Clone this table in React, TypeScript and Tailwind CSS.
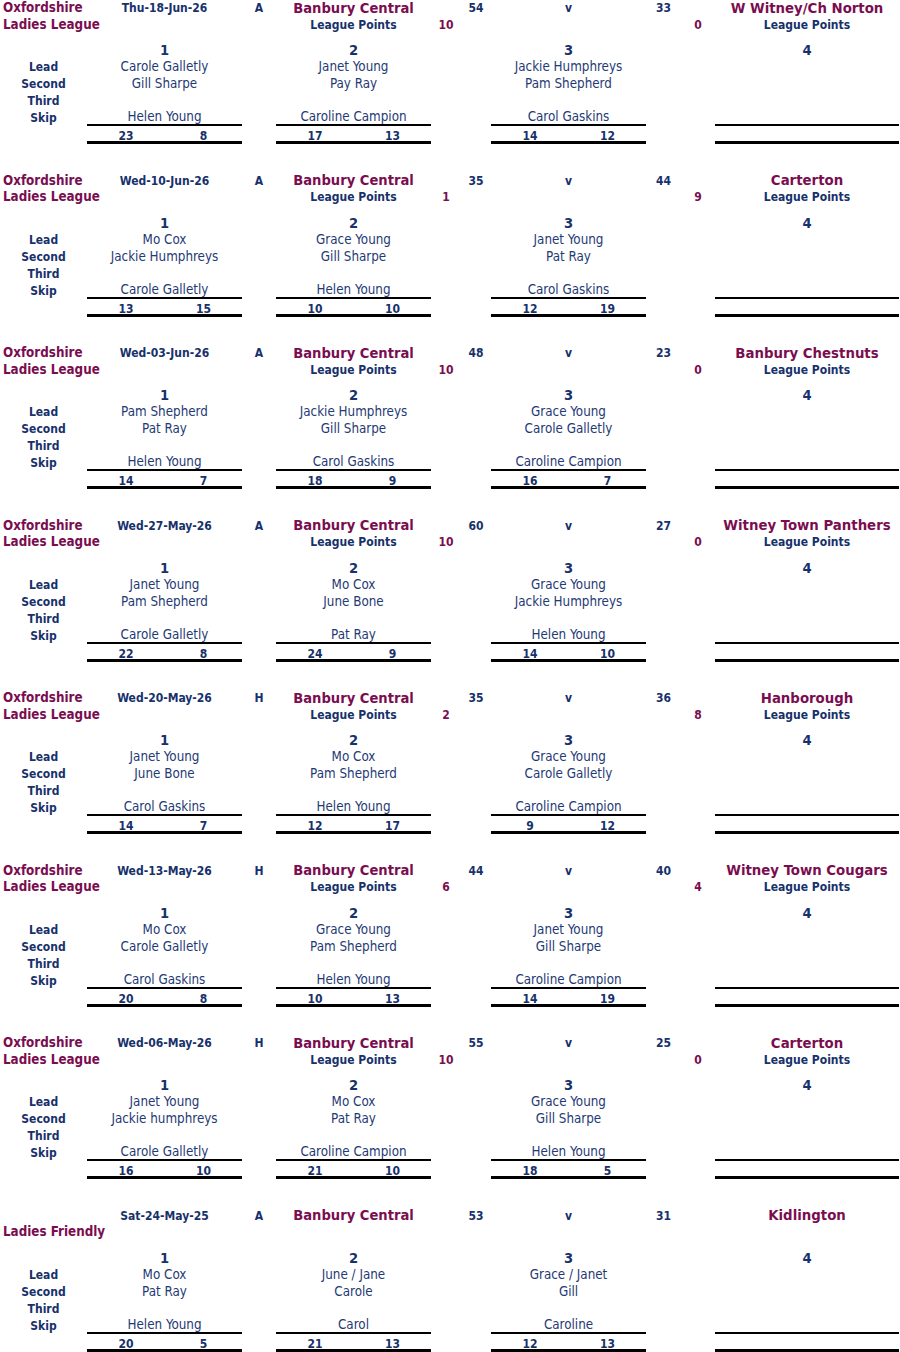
type Rink = { lead: string; second: string; third: string; skip: string; us: number; them: number };

type Match = {
  league1: string;
  league2: string;
  date: string;
  venue: string;
  home: number;
  away: number;
  opponent: string;
  points?: [number, number];
  rinks: Rink[];
};

const r = (lead: string, second: string, skip: string, us: number, them: number): Rink => ({
  lead,
  second,
  third: "",
  skip,
  us,
  them,
});

const matches: Match[] = [
  {
    league1: "Oxfordshire",
    league2: "Ladies League",
    date: "Thu-18-Jun-26",
    venue: "A",
    home: 54,
    away: 33,
    opponent: "W Witney/Ch Norton",
    points: [10, 0],
    rinks: [
      r("Carole Galletly", "Gill Sharpe", "Helen Young", 23, 8),
      r("Janet Young", "Pay Ray", "Caroline Campion", 17, 13),
      r("Jackie Humphreys", "Pam Shepherd", "Carol Gaskins", 14, 12),
    ],
  },
  {
    league1: "Oxfordshire",
    league2: "Ladies League",
    date: "Wed-10-Jun-26",
    venue: "A",
    home: 35,
    away: 44,
    opponent: "Carterton",
    points: [1, 9],
    rinks: [
      r("Mo Cox", "Jackie Humphreys", "Carole Galletly", 13, 15),
      r("Grace Young", "Gill Sharpe", "Helen Young", 10, 10),
      r("Janet Young", "Pat Ray", "Carol Gaskins", 12, 19),
    ],
  },
  {
    league1: "Oxfordshire",
    league2: "Ladies League",
    date: "Wed-03-Jun-26",
    venue: "A",
    home: 48,
    away: 23,
    opponent: "Banbury Chestnuts",
    points: [10, 0],
    rinks: [
      r("Pam Shepherd", "Pat Ray", "Helen Young", 14, 7),
      r("Jackie Humphreys", "Gill Sharpe", "Carol Gaskins", 18, 9),
      r("Grace Young", "Carole Galletly", "Caroline Campion", 16, 7),
    ],
  },
  {
    league1: "Oxfordshire",
    league2: "Ladies League",
    date: "Wed-27-May-26",
    venue: "A",
    home: 60,
    away: 27,
    opponent: "Witney Town Panthers",
    points: [10, 0],
    rinks: [
      r("Janet Young", "Pam Shepherd", "Carole Galletly", 22, 8),
      r("Mo Cox", "June Bone", "Pat Ray", 24, 9),
      r("Grace Young", "Jackie Humphreys", "Helen Young", 14, 10),
    ],
  },
  {
    league1: "Oxfordshire",
    league2: "Ladies League",
    date: "Wed-20-May-26",
    venue: "H",
    home: 35,
    away: 36,
    opponent: "Hanborough",
    points: [2, 8],
    rinks: [
      r("Janet Young", "June Bone", "Carol Gaskins", 14, 7),
      r("Mo Cox", "Pam Shepherd", "Helen Young", 12, 17),
      r("Grace Young", "Carole Galletly", "Caroline Campion", 9, 12),
    ],
  },
  {
    league1: "Oxfordshire",
    league2: "Ladies League",
    date: "Wed-13-May-26",
    venue: "H",
    home: 44,
    away: 40,
    opponent: "Witney Town Cougars",
    points: [6, 4],
    rinks: [
      r("Mo Cox", "Carole Galletly", "Carol Gaskins", 20, 8),
      r("Grace Young", "Pam Shepherd", "Helen Young", 10, 13),
      r("Janet Young", "Gill Sharpe", "Caroline Campion", 14, 19),
    ],
  },
  {
    league1: "Oxfordshire",
    league2: "Ladies League",
    date: "Wed-06-May-26",
    venue: "H",
    home: 55,
    away: 25,
    opponent: "Carterton",
    points: [10, 0],
    rinks: [
      r("Janet Young", "Jackie humphreys", "Carole Galletly", 16, 10),
      r("Mo Cox", "Pat Ray", "Caroline Campion", 21, 10),
      r("Grace Young", "Gill Sharpe", "Helen Young", 18, 5),
    ],
  },
  {
    league1: "",
    league2: "Ladies Friendly",
    date: "Sat-24-May-25",
    venue: "A",
    home: 53,
    away: 31,
    opponent: "Kidlington",
    rinks: [
      r("Mo Cox", "Pat Ray", "Helen Young", 20, 5),
      r("June / Jane", "Carole", "Carol", 21, 13),
      r("Grace / Janet", "Gill", "Caroline", 12, 13),
    ],
  },
];

const maroon = "text-[#7a0d50] font-bold";
const navyBold = "text-[#17316b] font-bold text-[12px]";
const name = "text-[#1f3a75] text-[13.3px]";
const cell = "flex items-center justify-center whitespace-nowrap";
const leftCell = "flex items-center pl-[3px] whitespace-nowrap text-[13.3px]";

// rink column starts: 2, 5, 9 (each spans two columns)
const rinkCols = ["col-start-2 col-span-2", "col-start-5 col-span-2", "col-start-9 col-span-2"];
const scoreCols = [
  ["col-start-2", "col-start-3"],
  ["col-start-5", "col-start-6"],
  ["col-start-9", "col-start-10"],
];

function MatchBlock({ m }: { m: Match }) {
  const roles: { label: string; key: "lead" | "second" | "third" | "skip" }[] = [
    { label: "Lead", key: "lead" },
    { label: "Second", key: "second" },
    { label: "Third", key: "third" },
    { label: "Skip", key: "skip" },
  ];

  return (
    <div className="grid grid-cols-[87px_78px_77px_34px_78px_77px_30px_30px_78px_77px_35px_34px_184px] grid-rows-[16px_17px_25px_17px_17px_17px_17px_18px]">
      {/* Row 1: league, date, venue, teams and totals */}
      <div className={`row-start-1 col-start-1 ${leftCell} ${maroon}`}>{m.league1}</div>
      <div className={`row-start-1 col-start-2 col-span-2 ${cell} ${navyBold}`}>{m.date}</div>
      <div className={`row-start-1 col-start-4 ${cell} ${navyBold}`}>{m.venue}</div>
      <div className={`row-start-1 col-start-5 col-span-2 ${cell} text-[14.6px] ${maroon}`}>Banbury Central</div>
      <div className={`row-start-1 col-start-8 ${cell} ${navyBold}`}>{m.home}</div>
      <div className={`row-start-1 col-start-9 col-span-2 ${cell} ${navyBold} text-[12.5px]`}>v</div>
      <div className={`row-start-1 col-start-11 ${cell} ${navyBold}`}>{m.away}</div>
      <div className={`row-start-1 col-start-13 ${cell} text-[14.8px] ${maroon}`}>{m.opponent}</div>

      {/* Row 2: league points */}
      <div className={`row-start-2 col-start-1 ${leftCell} ${maroon}`}>{m.league2}</div>
      {m.points && (
        <>
          <div className={`row-start-2 col-start-5 col-span-2 ${cell} ${navyBold}`}>League Points</div>
          <div className={`row-start-2 col-start-7 ${cell} ${maroon} text-[12px]`}>{m.points[0]}</div>
          <div className={`row-start-2 col-start-12 ${cell} ${maroon} text-[12px]`}>{m.points[1]}</div>
          <div className={`row-start-2 col-start-13 ${cell} ${navyBold}`}>League Points</div>
        </>
      )}

      {/* Row 3: rink numbers */}
      {rinkCols.map((c, i) => (
        <div key={c} className={`row-start-3 ${c} flex items-end justify-center`}>
          <span className="leading-[16px] text-[14.6px] font-bold text-[#17316b]">{i + 1}</span>
        </div>
      ))}
      <div className="row-start-3 col-start-13 flex items-end justify-center">
        <span className="leading-[16px] text-[14.6px] font-bold text-[#17316b]">4</span>
      </div>

      {/* Player rows */}
      {roles.map((role, ri) => {
        const rowStart = ["row-start-4", "row-start-5", "row-start-6", "row-start-7"][ri];
        const last = role.key === "skip";
        return (
          <div key={role.key} className="contents">
            <div className={`${rowStart} col-start-1 ${cell} pt-[1px] ${navyBold}`}>{role.label}</div>
            {m.rinks.map((rk, i) => (
              <div
                key={i}
                className={`${rowStart} ${rinkCols[i]} ${cell} pt-[1px] ${name} ${last ? "border-b-2 border-black" : ""}`}
              >
                {rk[role.key]}
              </div>
            ))}
            {last && <div className={`${rowStart} col-start-13 border-b-2 border-black`} />}
          </div>
        );
      })}

      {/* Score row */}
      {m.rinks.map((rk, i) => (
        <div key={i} className="contents">
          <div className={`row-start-8 ${scoreCols[i][0]} ${cell} pt-[5px] ${navyBold} border-b-[3px] border-black`}>
            {rk.us}
          </div>
          <div className={`row-start-8 ${scoreCols[i][1]} ${cell} pt-[5px] ${navyBold} border-b-[3px] border-black`}>
            {rk.them}
          </div>
        </div>
      ))}
      <div className="row-start-8 col-start-13 border-b-[3px] border-black" />
    </div>
  );
}

export default function App() {
  return (
    <div className="w-[900px] bg-white font-['DejaVu_Sans_Condensed','DejaVu_Sans',sans-serif] leading-none">
      {matches.map((m, i) => (
        <div key={i} className={i < matches.length - 1 ? "h-[172.5px]" : ""}>
          <MatchBlock m={m} />
        </div>
      ))}
    </div>
  );
}
